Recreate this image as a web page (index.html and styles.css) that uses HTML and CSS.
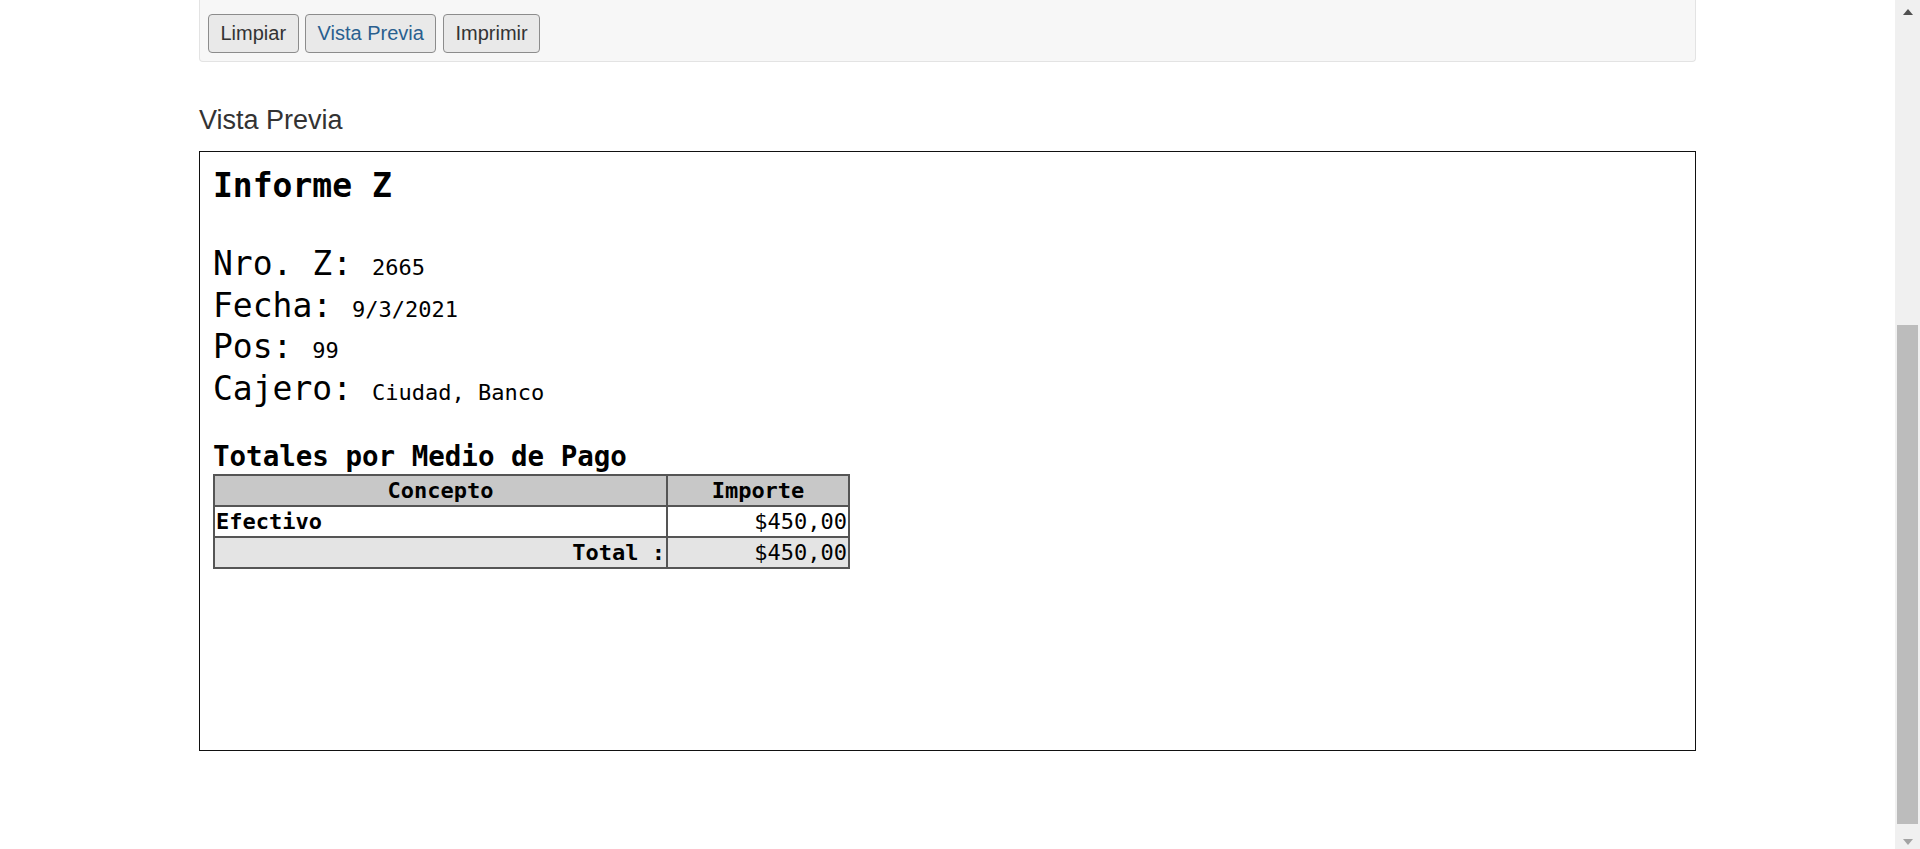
FILE: index.html
```html
<!DOCTYPE html>
<html lang="es">
<head>
<meta charset="utf-8">
<title>Informe Z - Vista Previa</title>
<link rel="stylesheet" href="styles.css">
</head>
<body>
<div class="page">
  <main class="main">
    <div class="container">
      <div class="well">
        <button class="btn" type="button">Limpiar</button>
        <button class="btn btn-active" type="button">Vista Previa</button>
        <button class="btn" type="button">Imprimir</button>
      </div>
      <h4 class="section-title">Vista Previa</h4>
      <div class="preview">
        <h1 class="report-title">Informe Z</h1>
        <div class="info">
          <div class="line">Nro. Z: <span class="val">2665</span></div>
          <div class="line">Fecha: <span class="val">9/3/2021</span></div>
          <div class="line">Pos: <span class="val">99</span></div>
          <div class="line">Cajero: <span class="val">Ciudad, Banco</span></div>
        </div>
        <h3 class="sub-title">Totales por Medio de Pago</h3>
        <table class="totals">
          <thead>
            <tr><th class="c1">Concepto</th><th class="c2">Importe</th></tr>
          </thead>
          <tbody>
            <tr><td class="concept">Efectivo</td><td class="amount">$450,00</td></tr>
            <tr class="total-row"><td class="total-label">Total :</td><td class="amount">$450,00</td></tr>
          </tbody>
        </table>
      </div>
    </div>
  </main>
  <aside class="scrollbar">
    <div class="sb-arrow"><span class="tri-up"></span></div>
    <div class="sb-track"></div>
    <div class="sb-thumb"></div>
    <div class="sb-arrow"><span class="tri-down"></span></div>
  </aside>
</div>
</body>
</html>
```

FILE: styles.css
```css
html, body {
  margin: 0;
  padding: 0;
  background: #ffffff;
}

body {
  font-family: "Liberation Sans", Arial, sans-serif;
  color: #333333;
  overflow: hidden;
}

.page {
  display: flex;
  height: 849px;
}

.main {
  flex: 1;
  min-width: 0;
}

.container {
  width: 1497px;
  margin: 0 auto;
}

.well {
  display: flex;
  gap: 6.5px;
  padding: 14px 8px 8px;
  background: #f7f7f7;
  border: 1px solid #e3e3e3;
  border-top: none;
  border-radius: 0 0 4px 4px;
}

.btn {
  font-family: "Liberation Sans", Arial, sans-serif;
  font-size: 20px;
  line-height: 23px;
  padding: 7px 11.5px;
  margin: 0;
  color: #333333;
  background: #e9e9e9;
  border: 1px solid #8c8c8c;
  border-radius: 4px;
}

.btn-active {
  color: #2a5f8f;
}

.section-title {
  margin: 43px 0 15px;
  font-size: 27px;
  line-height: 31px;
  font-weight: normal;
  color: #333333;
}

.preview {
  box-sizing: border-box;
  height: 600px;
  border: 1px solid #111111;
  padding: 14px 13px;
  font-family: "DejaVu Sans Mono", "Liberation Mono", monospace;
  color: #000000;
}

.report-title {
  margin: 0 0 37px;
  font-size: 33px;
  line-height: 40px;
  font-weight: bold;
}

.line {
  font-size: 33px;
  line-height: 41.7px;
}

.val {
  font-size: 22px;
  line-height: 1;
}

.sub-title {
  margin: 29px 0 1.5px;
  font-size: 27.5px;
  line-height: 34px;
  font-weight: bold;
}

.totals {
  table-layout: fixed;
  width: 637px;
  border-collapse: separate;
  border-spacing: 0;
  border: 1px solid #555555;
  font-size: 22px;
  line-height: 29px;
}

.totals th,
.totals td {
  box-sizing: border-box;
  border: 1px solid #555555;
  padding: 0 1px;
  white-space: nowrap;
}

.totals th {
  background: #c8c8c8;
  font-weight: bold;
  text-align: center;
}

.totals .c1 {
  width: 453px;
}

.concept {
  font-weight: bold;
  text-align: left;
}

.amount {
  text-align: right;
}

.total-row td {
  background: #e4e4e4;
}

.total-label {
  font-weight: bold;
  text-align: right;
}

.scrollbar {
  width: 25px;
  flex: none;
  display: flex;
  flex-direction: column;
  background: #f0f0f0;
}

.sb-arrow {
  height: 25px;
  display: flex;
  align-items: center;
  justify-content: center;
}

.tri-up {
  width: 0;
  height: 0;
  border-left: 5px solid transparent;
  border-right: 5px solid transparent;
  border-bottom: 6px solid #505050;
  margin-top: -2px;
}

.tri-down {
  width: 0;
  height: 0;
  border-left: 5px solid transparent;
  border-right: 5px solid transparent;
  border-top: 6px solid #a3a3a3;
  margin-top: 10px;
}

.sb-track {
  height: 300px;
}

.sb-thumb {
  height: 499px;
  margin: 0 2px;
  background: #bcbcbc;
}
```
